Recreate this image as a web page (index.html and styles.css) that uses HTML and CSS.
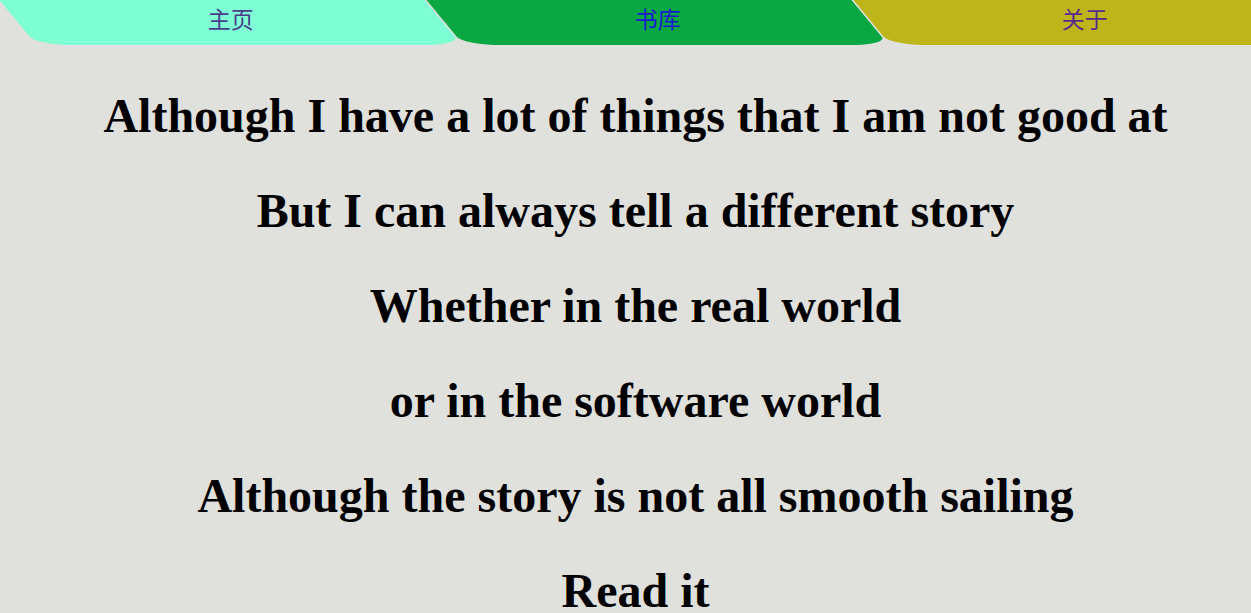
FILE: index.html
```html
<!DOCTYPE html>
<html lang="zh">
<head>
<meta charset="utf-8">
<title>Story</title>
<link rel="stylesheet" href="styles.css">
</head>
<body>
<nav class="nav">
  <a class="tab tab-home" href="#"><span class="tab-label">主页</span></a>
  <a class="tab tab-library" href="#"><span class="tab-label">书库</span></a>
  <a class="tab tab-about" href="#"><span class="tab-label">关于</span></a>
</nav>
<main class="story">
  <p class="line">Although I have a lot of things that I am not good at</p>
  <p class="line">But I can always tell a different story</p>
  <p class="line">Whether in the real world</p>
  <p class="line">or in the software world</p>
  <p class="line">Although the story is not all smooth sailing</p>
  <p class="line">Read it</p>
</main>
</body>
</html>
```

FILE: styles.css
```css
html, body {
  margin: 0;
  padding: 0;
}

body {
  background: #e0e0dc;
  overflow: hidden;
  font-family: "Liberation Serif", "Times New Roman", serif;
}

.nav {
  display: flex;
  gap: 2px;
  padding-left: 18px;
  height: 45px;
  overflow: hidden;
}

.tab {
  flex: 0 0 425px;
  height: 45px;
  display: flex;
  align-items: center;
  justify-content: center;
  text-decoration: none;
  transform: skewX(39.5deg);
  border-radius: 0 0 38px 38px / 0 0 8px 8px;
}

.tab-label {
  transform: skewX(-39.5deg);
  font-family: "Noto Sans CJK SC", "Noto Sans", sans-serif;
  font-size: 23px;
  line-height: 1;
  margin-top: -9px;
  margin-left: 6px;
}

.tab-home {
  background: #7fffd4;
  color: #483d8b;
}

.tab-library {
  background: #0aa842;
  color: #1a1ad0;
}

.tab-about {
  background: #bdb51a;
  color: #5a2a8a;
}

.story {
  padding-top: 23px;
  padding-left: 20px;
  text-align: center;
}

.line {
  margin: 0;
  font-size: 48px;
  font-weight: 700;
  line-height: 95px;
  color: #000;
}
```
